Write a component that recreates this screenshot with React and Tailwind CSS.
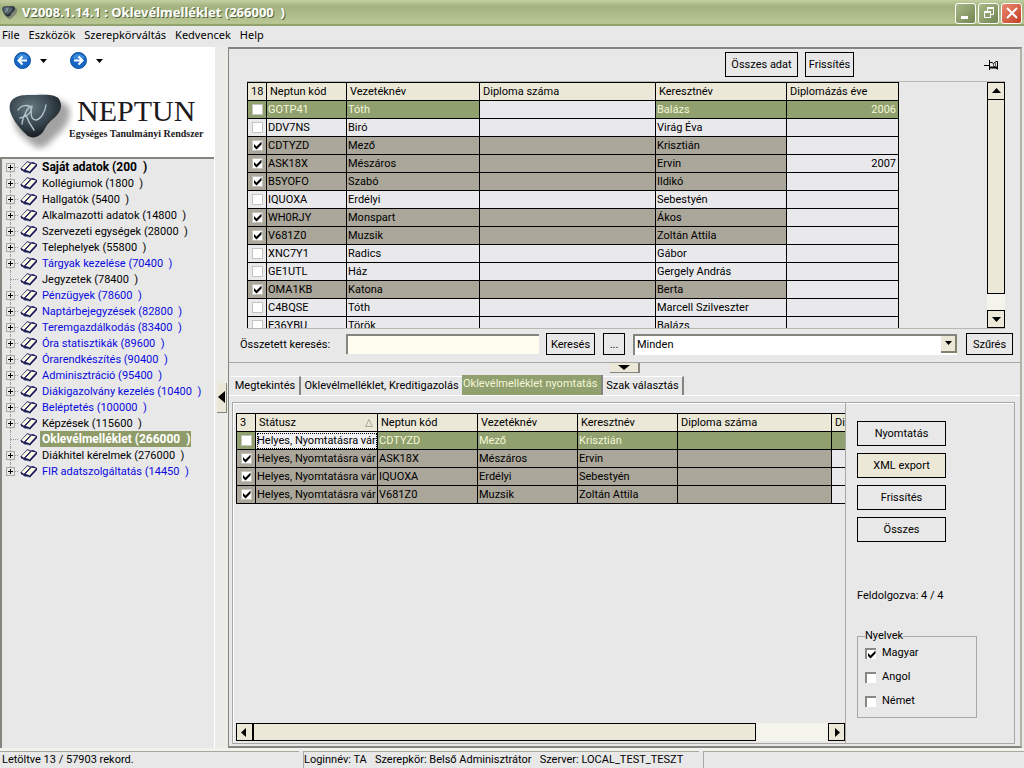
import React from "react";

const frameFont = "font-[Roboto,'Liberation_Sans',Arial,sans-serif]";
const uiFont = "font-['Noto_Sans','Open_Sans',sans-serif]";

const treeItems = [
  { label: "Saját adatok (200\u00a0\u00a0)", kind: "bold" },
  { label: "Kollégiumok (1800\u00a0\u00a0)" },
  { label: "Hallgatók (5400\u00a0\u00a0)" },
  { label: "Alkalmazotti adatok (14800\u00a0\u00a0)" },
  { label: "Szervezeti egységek (28000\u00a0\u00a0)" },
  { label: "Telephelyek (55800\u00a0\u00a0)" },
  { label: "Tárgyak kezelése (70400\u00a0\u00a0)", kind: "blue" },
  { label: "Jegyzetek (78400\u00a0\u00a0)", leaf: true },
  { label: "Pénzügyek (78600\u00a0\u00a0)", kind: "blue" },
  { label: "Naptárbejegyzések (82800\u00a0\u00a0)", kind: "blue" },
  { label: "Teremgazdálkodás (83400\u00a0\u00a0)", kind: "blue" },
  { label: "Óra statisztikák (89600\u00a0\u00a0)", kind: "blue" },
  { label: "Órarendkészítés (90400\u00a0\u00a0)", kind: "blue" },
  { label: "Adminisztráció (95400\u00a0\u00a0)", kind: "blue" },
  { label: "Diákigazolvány kezelés (10400\u00a0\u00a0)", kind: "blue" },
  { label: "Beléptetés (100000\u00a0\u00a0)", kind: "blue" },
  { label: "Képzések (115600\u00a0\u00a0)" },
  { label: "Oklevélmelléklet (266000\u00a0\u00a0)", kind: "selected", leaf: true },
  { label: "Diákhitel kérelmek (276000\u00a0\u00a0)" },
  { label: "FIR adatszolgáltatás (14450\u00a0\u00a0)", kind: "blue" },
];

const labelStyles = {
  normal: "text-black",
  bold: "text-[12px] font-bold text-black",
  blue: "text-[#0a0ae0]",
  selected: "bg-[#8f9c69] text-[12px] font-bold text-white",
};

const students = [
  ["GOTP41", "Tóth", "Balázs", "2006", false],
  ["DDV7NS", "Biró", "Virág Éva", "", false],
  ["CDTYZD", "Mező", "Krisztián", "", true],
  ["ASK18X", "Mészáros", "Ervin", "2007", true],
  ["B5YOFO", "Szabó", "Ildikó", "", true],
  ["IQUOXA", "Erdélyi", "Sebestyén", "", false],
  ["WH0RJY", "Monspart", "Ákos", "", true],
  ["V681Z0", "Muzsik", "Zoltán Attila", "", true],
  ["XNC7Y1", "Radics", "Gábor", "", false],
  ["GE1UTL", "Ház", "Gergely András", "", false],
  ["OMA1KB", "Katona", "Berta", "", true],
  ["C4BQSE", "Tóth", "Marcell Szilveszter", "", false],
  ["E36YBU", "Török", "Balázs", "", false],
];

const printRows = [
  ["CDTYZD", "Mező", "Krisztián"],
  ["ASK18X", "Mészáros", "Ervin"],
  ["IQUOXA", "Erdélyi", "Sebestyén"],
  ["V681Z0", "Muzsik", "Zoltán Attila"],
];

function Stone({ className }) {
  return (
    <svg viewBox="0 0 64 60" className={className} aria-hidden="true">
      <defs>
        <radialGradient id="stone" cx="0.4" cy="0.3" r="0.75">
          <stop offset="0" stopColor="#66797f" />
          <stop offset="0.5" stopColor="#3c4a53" />
          <stop offset="1" stopColor="#12161a" />
        </radialGradient>
        <filter id="soft" x="-20%" y="-20%" width="140%" height="140%">
          <feGaussianBlur stdDeviation="3" />
        </filter>
      </defs>
      <path d="M8 10C20 1 44 4 57 11C65 18 60 34 46 44C38 54 30 58 24 52C14 45 4 36 5 24Z" fill="#666" opacity="0.6" filter="url(#soft)" />
      <path d="M4 6C10 1 18 2 28 2C38 1 48 2 50 6C54 13 52 19 44 26C38 31 37 34 34 39C30 44 24 46 19 43C12 37 4 28 1 18C0 12 1 9 4 6Z" fill="url(#stone)" />
      <path d="M9 17C12 12 20 11 22 15C23 20 17 24 11 25M21 13C16 19 13 27 13 31M17 22C19 28 22 33 25 37M23 13C21 20 22 27 27 27C32 26 36 19 37 12" fill="none" stroke="#b4c3ca" strokeWidth="1.4" strokeLinecap="round" />
    </svg>
  );
}

function NavArrow({ flip }) {
  return (
    <svg viewBox="0 0 17 17" className="size-[17px]" aria-hidden="true">
      <circle cx="8.5" cy="8.5" r="8" fill="#1768c4" stroke="#0c4da0" />
      <path d="M2.5 6A6.5 6.5 0 0 1 14.5 6Q8.500 9 2.500 6Z" fill="#4d9be8" opacity="0.7" />
      <path
        d={flip ? "M4 8.500H12.500M8.500 4.500L12.500 8.500L8.500 12.500" : "M13 8.500H4.500M8.500 4.500L4.500 8.500L8.500 12.500"}
        fill="none" stroke="#fff" strokeWidth="2"
      />
    </svg>
  );
}

function Triangle({ dir }) {
  const paths = {
    up: "M0 5H9L4.500 0Z",
    down: "M0 1H9L4.500 6Z",
    left: "M6 -1V8L1 3.500Z",
    right: "M3 -1V8L8 3.500Z",
  };
  return (
    <svg viewBox="0 0 9 7" className="block h-[7px] w-[9px] overflow-visible" aria-hidden="true">
      <path d={paths[dir]} fill="#000" />
    </svg>
  );
}

function MenuArrow() {
  return (
    <svg viewBox="0 0 7 4" className="block h-1 w-[7px]" aria-hidden="true">
      <path d="M0 0H7L3.500 4Z" />
    </svg>
  );
}

function Book() {
  return (
    <svg viewBox="0 0 18 14" className="h-[14px] w-[18px] shrink-0" aria-hidden="true">
      <path d="M0.500 8.500L7.500 1L10 2.500L13 2L17 4V6L10 13.500L7.500 12.500L5 12.500L1 10Z" fill="#1a1a5c" />
      <path d="M1.500 8L7.500 2L10 3.500L4 10Z" fill="#fbfbe4" />
      <path d="M5.500 10L11.500 3.500L16 4.500L9.500 11.500L7.500 10.500Z" fill="#fbfbe4" />
      <path d="M4.500 10L10.500 3.500" stroke="#1a1a5c" strokeWidth="1" />
    </svg>
  );
}

function Tick({ label, checked, sunken }) {
  return (
    <span className={`relative flex size-[11px] shrink-0 items-center justify-center bg-white ${sunken ? "border-t-2 border-l-2 border-[#8a8a84]" : "border border-[#c4c4bc]"}`}>
      <input type="checkbox" aria-label={label} defaultChecked={checked} className="peer absolute inset-0 m-0 appearance-none" />
      <svg viewBox="0 0 9 9" className="pointer-events-none hidden size-[9px] shrink-0 peer-checked:block" aria-hidden="true">
        <path d="M1 3V6L3.500 8.500L8.500 3.500V0.500L3.500 5.500Z" fill="#000" />
      </svg>
    </span>
  );
}

function FlatButton({ children, className }) {
  return (
    <button type="button" className={`flex items-center justify-center border border-black pt-[2px] ${className}`}>
      {children}
    </button>
  );
}

const th = "h-[18px] overflow-hidden border-r border-b border-black bg-[#ebe8d8] p-0 pl-[3px] text-left font-normal whitespace-nowrap";
const td = "h-[18px] overflow-hidden border-r border-b border-black p-0 pl-[1px] whitespace-nowrap";
const thLast = "h-[18px] overflow-hidden border-b border-black bg-[#ebe8d8] p-0 pl-[3px] text-left font-normal whitespace-nowrap";
const tdLast = "h-[18px] border-b border-black p-0";

function StudentGrid() {
  return (
    <div className="min-w-0 flex-1 overflow-hidden">
      <table className="w-[652px] table-fixed border-separate border-spacing-0 border-t border-l border-black leading-[15px]">
        <colgroup>
          <col className="w-[19px]" />
          <col className="w-[80px]" />
          <col className="w-[133px]" />
          <col className="w-[176px]" />
          <col className="w-[131px]" />
          <col className="w-[112px]" />
        </colgroup>
        <thead>
          <tr>
            {["18", "Neptun kód", "Vezetéknév", "Diploma száma", "Keresztnév", "Diplomázás éve"].map((h) => (
              <th key={h} className={th}>{h}</th>
            ))}
          </tr>
        </thead>
        <tbody>
          {students.map(([code, last, first, year, on], i) => {
            const tone = i === 0 ? "bg-[#90a06e] text-[#f4f6d8]" : on ? "bg-[#aaa699]" : "bg-[#e9e9ec]";
            const plain = "bg-[#e9e9ec]";
            return (
              <tr key={code}>
                <td className={`${td} ${tone}`}>
                  <div className="flex justify-center"><Tick label={code} checked={on} /></div>
                </td>
                <td className={`${td} ${tone}`}>{code}</td>
                <td className={`${td} ${tone}`}>{last}</td>
                <td className={`${td} ${i === 0 ? plain : tone}`} />
                <td className={`${td} ${tone}`}>{first}</td>
                <td className={`${td} pr-[2px] text-right ${i === 0 ? tone : plain}`}>{year}</td>
              </tr>
            );
          })}
        </tbody>
      </table>
    </div>
  );
}

function PrintGrid() {
  return (
    <div className="min-h-0 min-w-0 flex-1 overflow-hidden">
      <table className="w-full table-fixed border-separate border-spacing-0 border-t border-l border-black leading-[15px]">
        <colgroup>
          <col className="w-[19px]" />
          <col className="w-[122px]" />
          <col className="w-[100px]" />
          <col className="w-[100px]" />
          <col className="w-[100px]" />
          <col className="w-[154px]" />
          <col />
        </colgroup>
        <thead>
          <tr>
            <th className={`${th} text-center`}>3</th>
            <th className={th}>
              <div className="flex items-center justify-between pr-1">
                Státusz
                <svg viewBox="0 0 8 8" className="size-2" aria-hidden="true">
                  <path d="M0.500 7.500H7.500L4 0.500Z" fill="none" stroke="#a8a698" />
                </svg>
              </div>
            </th>
            {["Neptun kód", "Vezetéknév", "Keresztnév", "Diploma száma"].map((h) => (
              <th key={h} className={th}>{h}</th>
            ))}
            <th className={thLast}>Di</th>
          </tr>
        </thead>
        <tbody>
          {printRows.map(([code, last, first], i) => {
            const tone = i === 0 ? "bg-[#90a06e] text-[#f4f6d8]" : "bg-[#aaa699]";
            return (
              <tr key={code}>
                <td className={`${td} ${tone}`}>
                  <div className="flex justify-center"><Tick label={code} checked={i > 0} /></div>
                </td>
                <td className={`${td} ${i === 0 ? "bg-[#f1f1f4] outline-1 -outline-offset-2 outline-dotted outline-black" : tone}`}>
                  Helyes, Nyomtatásra vár
                </td>
                <td className={`${td} ${tone}`}>{code}</td>
                <td className={`${td} ${tone}`}>{last}</td>
                <td className={`${td} ${tone}`}>{first}</td>
                <td className={`${td} ${tone}`} />
                <td className={`${tdLast} ${i === 0 ? tone : "bg-[#e9e9ec]"}`} />
              </tr>
            );
          })}
        </tbody>
      </table>
    </div>
  );
}

function TitleBar() {
  const box = "flex size-[21px] items-center justify-center rounded-[3px] border border-white";
  return (
    <header className="flex h-[26px] shrink-0 items-center bg-linear-to-b from-[#c3cfa0] via-[#a3b17e] via-25% to-[#bccb98] pr-[2px] pl-[2px] shadow-[inset_0_-2px_1px_#8fa06c]">
      <Stone className="size-4" />
      <h1 className={`ml-1 flex-1 text-[13px] font-bold whitespace-nowrap text-white [text-shadow:1px_1px_0_#55633a] ${uiFont}`}>
        V2008.1.14.1 : Oklevélmelléklet (266000&nbsp;&nbsp;)
      </h1>
      <div className="flex gap-[2px]">
        <button type="button" aria-label="Minimize" className={`${box} bg-linear-to-br from-[#a9b98a] to-[#71864f]`}>
          <svg viewBox="0 0 18 18" className="size-[18px]"><path d="M4 12H11V15H4Z" fill="#fff" /></svg>
        </button>
        <button type="button" aria-label="Restore" className={`${box} bg-linear-to-br from-[#a9b98a] to-[#71864f]`}>
          <svg viewBox="0 0 18 18" className="size-[18px]" fill="none" stroke="#fff">
            <path d="M4.500 8.500H10.500V13.500H4.500ZM4 7.500H11M7.500 7V4.500H13.500V10.500H11M7 3.500H14" />
          </svg>
        </button>
        <button type="button" aria-label="Close" className={`${box} bg-linear-to-br from-[#e88a70] to-[#c23c22]`}>
          <svg viewBox="0 0 18 18" className="size-[18px]"><path d="M4 4L14 14M14 4L4 14" stroke="#fff" strokeWidth="2" /></svg>
        </button>
      </div>
    </header>
  );
}

function Sidebar() {
  return (
    <aside className="flex w-[214px] shrink-0 flex-col">
      <div className="h-[110px] shrink-0 bg-white">
        <div className="flex items-center pt-[5px] pl-[14px]">
          <button type="button" aria-label="Vissza"><NavArrow /></button>
          <button type="button" aria-label="Előzmények" className="ml-[9px]"><MenuArrow /></button>
          <button type="button" aria-label="Előre" className="ml-[23px]"><NavArrow flip /></button>
          <button type="button" aria-label="Következők" className="ml-[9px]"><MenuArrow /></button>
        </div>
        <div className="flex pt-[24px] pl-[9px]">
          <Stone className="h-[60px] w-16 shrink-0" />
          <div className="-ml-1 font-['Liberation_Serif','Times_New_Roman',serif] whitespace-nowrap text-[#1c1a1c]">
            <div className="pl-[8px] text-[30px] leading-[36px]">NEPTUN</div>
            <div className="text-[10px] leading-[10px] font-bold">Egységes Tanulmányi Rendszer</div>
          </div>
        </div>
      </div>
      <ul className="min-h-0 flex-1 border-t-2 border-l-2 border-[#85857f] bg-[#e8e8e8]">
        {treeItems.map((item, i) => (
          <li key={item.label} className="flex h-4 items-center pl-1">
            <span className="relative flex h-4 w-[14px] shrink-0 items-center">
              <span className={`absolute left-1 w-0 border-l border-dotted border-[#a0a09a] ${i === 0 ? "top-2 bottom-0" : i === treeItems.length - 1 ? "top-0 h-2" : "inset-y-0"}`} />
              <span className="absolute top-2 left-1 w-2 border-t border-dotted border-[#a0a09a]" />
              {!item.leaf && (
                <button type="button" aria-label={`${item.label} kibontása`} className="relative size-[9px] border border-[#a8a89e] bg-[#e8e8e8]">
                  <svg viewBox="0 0 7 7" className="block size-[7px]"><path d="M1 3.500H6M3.500 1V6" stroke="#000" /></svg>
                </button>
              )}
            </span>
            <Book />
            <a href="#" className={`ml-[2px] pt-[1px] pr-[1px] pl-[2px] leading-[15px] whitespace-pre ${labelStyles[item.kind || "normal"]}`}>{item.label}</a>
          </li>
        ))}
      </ul>
    </aside>
  );
}

function SearchRow() {
  return (
    <div className="flex items-center pr-[7px] pl-[11px]">
      <label htmlFor="search" className="w-[106px] pt-[2px]">Összetett keresés:</label>
      <input id="search" type="text" className="h-5 w-[193px] border-t-2 border-l-2 border-[#85857f] bg-[#fffcf0] outline-none" />
      <FlatButton className="ml-[7px] h-[22px] w-[49px]">Keresés</FlatButton>
      <FlatButton className="ml-2 h-[22px] w-[22px]">...</FlatButton>
      <div className="relative ml-2 flex-1">
        <select aria-label="Szűrő" className="block h-[21px] w-full appearance-none border-t-2 border-l-2 border-[#85857f] bg-white pl-[2px] outline-none">
          <option>Minden</option>
        </select>
        <span className="pointer-events-none absolute top-[2px] right-0 flex h-[17px] w-4 items-center justify-center border-r-2 border-b-2 border-[#85816c] bg-[#ebe8d8]">
          <MenuArrow />
        </span>
      </div>
      <FlatButton className="ml-[9px] h-[22px] w-[47px]">Szűrés</FlatButton>
    </div>
  );
}

function TopPane() {
  return (
    <section className="shrink-0 border-b border-[#a8a8a2] pb-[7px]">
      <div className="flex h-8 items-start gap-[7px] pt-[3px] pr-[21px]">
        <div className="flex-1" />
        <FlatButton className="h-[25px] w-[73px]">Összes adat</FlatButton>
        <FlatButton className="h-[25px] w-[49px]">Frissítés</FlatButton>
        <div className="w-[116px]" />
        <button type="button" aria-label="Rögzítés" className="mt-2">
          <svg viewBox="0 0 15 10" className="block h-[10px] w-[15px]" fill="none" stroke="#000">
            <path d="M0 5.500H5M5.500 0V10M6 2.500H8L9.500 3.500L12 1.500H13.500V9M6 7.500H9L10.500 6.500L13.500 9.500" />
            <path d="M6 7.500H13" strokeWidth="2" />
            <path d="M9.500 4V7M11.500 3V7" stroke="#555" />
          </svg>
        </button>
      </div>
      <div className="pr-[15px] pl-[18px]">
        <div className="flex h-[248px] border-y border-[#b8b8b2]">
          <StudentGrid />
          <div className="flex w-[18px] flex-col">
            <button type="button" aria-label="Fel" className="flex h-[18px] shrink-0 items-center justify-center border border-black bg-[#ebe8d8]"><Triangle dir="up" /></button>
            <div className="flex-1 border-x border-b border-black bg-[#ebe8d8]" />
            <div className="h-4 bg-[#f4f3ec]" />
            <button type="button" aria-label="Le" className="flex h-[18px] shrink-0 items-center justify-center border border-black bg-[#ebe8d8]"><Triangle dir="down" /></button>
          </div>
        </div>
      </div>
      <div className="pt-[4px]"><SearchRow /></div>
    </section>
  );
}

function BottomPane() {
  const tab = "h-[19px] border-t border-r-2 border-t-white border-r-[#85857f] whitespace-nowrap";
  return (
    <section className="flex min-h-0 flex-1 flex-col">
      <div className="flex h-3 shrink-0 justify-center">
        <button type="button" aria-label="Panel elrejtése" className="flex h-[10px] w-[30px] items-center justify-center border-r-2 border-b border-[#85857f] bg-[#ebe8d8]">
          <svg viewBox="0 0 12 5" className="h-[5px] w-3"><path d="M0 0H12L6 5Z" /></svg>
        </button>
      </div>
      <div role="tablist" className="flex h-5 shrink-0 items-end pl-[2px]">
        <button type="button" role="tab" className={`${tab} w-[70px]`}>Megtekintés</button>
        <button type="button" role="tab" className="h-[19px] w-[161px] border-t border-white whitespace-nowrap">Oklevélmelléklet, Kreditigazolás</button>
        <button type="button" role="tab" aria-selected="true" className="h-5 w-[141px] border-r-2 border-[#85857f] bg-[#90a06e] pb-[2px] pl-[1px] text-left whitespace-nowrap text-[#f4f6d8]">Oklevélmelléklet nyomtatás</button>
        <button type="button" role="tab" className={`${tab} w-[81px]`}>Szak választás</button>
      </div>
      <div className="flex min-h-0 flex-1 border-t border-white pt-[6px] pr-[5px] pb-[2px] pl-[3px]">
        <div className="flex min-h-0 min-w-0 flex-1 border border-[#a8a8a2] pl-[3px] shadow-[inset_1px_1px_0_#fff]">
          <div className="flex min-w-0 flex-1 flex-col border-r border-[#a8a8a2] pt-[10px] pb-[2px]">
            <PrintGrid />
            <div className="flex h-[18px] shrink-0">
              <button type="button" aria-label="Balra" className="flex w-[17px] items-center justify-center border border-black bg-[#ebe8d8]"><Triangle dir="left" /></button>
              <div className="flex-[503] border border-black bg-[#ebe8d8]" />
              <div className="flex-[72] bg-[#f4f3ec]" />
              <button type="button" aria-label="Jobbra" className="flex w-[17px] items-center justify-center border border-black bg-[#ebe8d8]"><Triangle dir="right" /></button>
            </div>
          </div>
          <div className="w-[168px] shrink-0 pt-[18px] pl-[11px]">
            <div className="flex flex-col gap-[7px]">
              <FlatButton className="h-[25px] w-[89px]">Nyomtatás</FlatButton>
              <FlatButton className="h-[25px] w-[89px] bg-[#ebe8d8]">XML export</FlatButton>
              <FlatButton className="h-[25px] w-[89px]">Frissítés</FlatButton>
              <FlatButton className="h-[25px] w-[89px]">Összes</FlatButton>
            </div>
            <p className="mt-[46px] leading-4">Feldolgozva: 4 / 4</p>
            <fieldset className="mt-[25px] h-[89px] w-[120px] border border-[#a8a8a2] pl-[7px]">
              <legend className="leading-[14px]">Nyelvek</legend>
              <div className="flex flex-col gap-2 pt-[2px]">
                {["Magyar", "Angol", "Német"].map((l, i) => (
                  <label key={l} className="flex items-center gap-[6px] leading-4">
                    <Tick label={l} checked={i === 0} sunken />
                    {l}
                  </label>
                ))}
              </div>
            </fieldset>
          </div>
        </div>
      </div>
    </section>
  );
}

export default function App() {
  return (
    <div className={`flex h-screen flex-col overflow-hidden bg-[#e8e8e8] text-[11px] text-black ${frameFont}`}>
      <TitleBar />
      <nav className={`flex h-[21px] shrink-0 items-center gap-[9px] pb-[3px] pl-[2px] ${uiFont}`}>
        {["File", "Eszközök", "Szerepkörváltás", "Kedvencek", "Help"].map((m) => (
          <button key={m} type="button">{m}</button>
        ))}
      </nav>
      <div className="flex min-h-0 flex-1">
        <Sidebar />
        <div className="flex w-[14px] shrink-0 items-center justify-center border-l border-white bg-[#ebebe8]">
          <button type="button" aria-label="Menü elrejtése" className="flex h-[30px] w-[10px] items-center justify-center border-r border-b border-[#85857f] bg-[#ebe8d8]">
            <svg viewBox="0 0 7 12" className="h-3 w-[7px]"><path d="M7 0V12L0 6Z" /></svg>
          </button>
        </div>
        <main className="mr-[2px] flex min-w-0 flex-1 flex-col border-t-2 border-r-2 border-b-2 border-l border-[#85857f] border-r-[#b4b2a4]">
          <TopPane />
          <BottomPane />
        </main>
      </div>
      <footer className="flex h-5 shrink-0 items-center gap-1 border-t-[3px] border-[#f2f1ec] whitespace-pre">
        <div className="h-full w-[299px] border-t border-[#a8a8a2] pl-[2px] leading-4">Letöltve 13 / 57903 rekord.</div>
        <div className="h-full w-[396px] border-t border-l border-[#a8a8a2] leading-4">Loginnév: TA   Szerepkör: Belső Adminisztrátor   Szerver: LOCAL_TEST_TESZT</div>
        <div className="h-full flex-1 border-t border-l border-[#a8a8a2]" />
      </footer>
    </div>
  );
}
